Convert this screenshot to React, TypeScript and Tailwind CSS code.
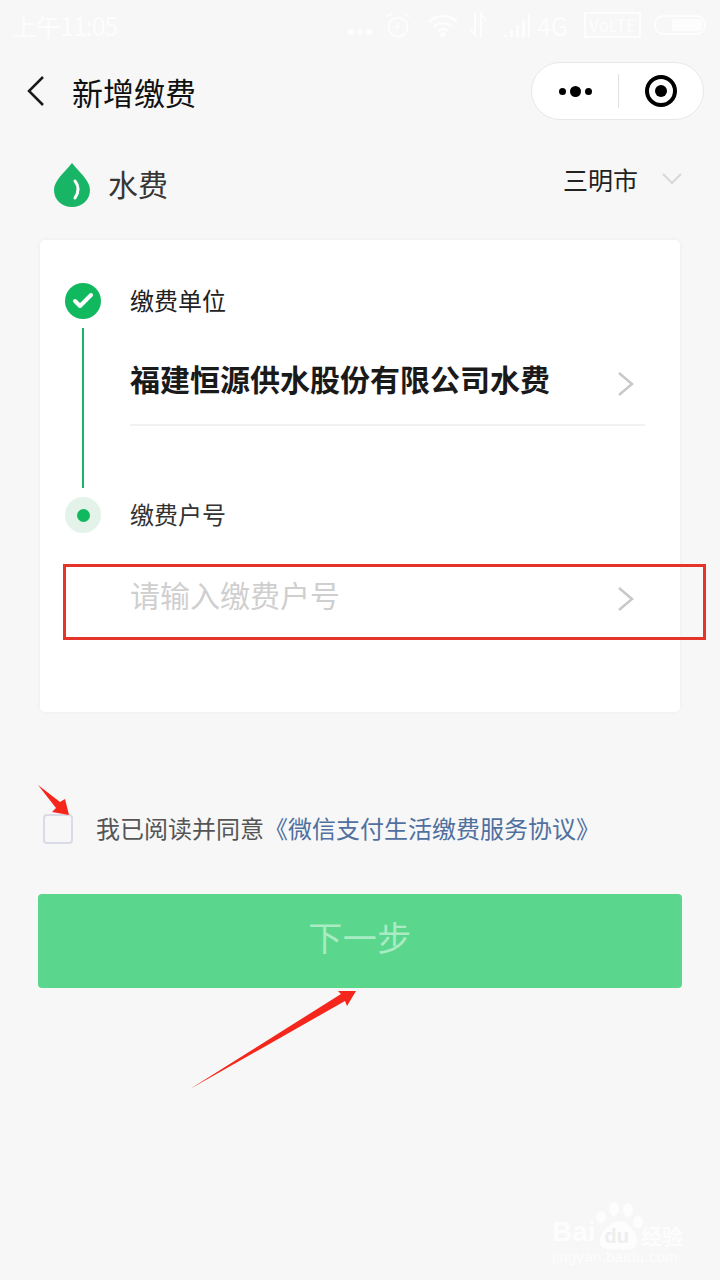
import { Check } from 'lucide-react'

const cjk = "font-['Noto_Sans_CJK_SC','Noto_Sans',sans-serif]"

function RowChevron({ className }: { className?: string }) {
  return (
    <svg className={className} width="18" height="26" viewBox="0 0 18 26" fill="none" stroke="#c8c8c8" strokeWidth="2.500">
      <path d="M2 2l13 11L2 24" />
    </svg>
  )
}

function StatusBar() {
  return (
    <div className="flex h-[50px] items-center justify-between pl-[12px] pr-[14px] text-white opacity-80">
      <span className="text-[25px] leading-none tracking-[-1px]">上午11:05</span>
      <div className="flex items-center">
        <div className="mt-[14px] flex gap-[3px]">
          <span className="h-[6px] w-[6px] rounded-full bg-white" />
          <span className="h-[6px] w-[6px] rounded-full bg-white" />
          <span className="h-[6px] w-[6px] rounded-full bg-white" />
        </div>
        {/* alarm */}
        <svg className="ml-[13px]" width="26" height="28" viewBox="0 0 26 28" fill="none" stroke="white" strokeWidth="2">
          <circle cx="13" cy="16" r="9.500" />
          <path d="M13 11v6l-3-2M2 6l5-4M24 6l-5-4" />
        </svg>
        {/* wifi */}
        <svg className="ml-[15px]" width="34" height="24" viewBox="0 0 32 24" fill="none" stroke="white" strokeWidth="2.500">
          <path d="M2 9c8-8 20-8 28 0M7 14c5-5 13-5 18 0M11 18c3-2.500 7-2.500 10 0" />
          <circle cx="16" cy="22" r="1.500" fill="white" />
        </svg>
        {/* data arrows */}
        <svg className="ml-[8px]" width="20" height="30" viewBox="0 0 20 30" fill="none" stroke="white" strokeWidth="2">
          <path d="M7 3v22L2 19M13 27V4l5 6" />
        </svg>
        {/* signal */}
        <svg className="ml-[14px]" width="30" height="26" viewBox="0 0 28 26" fill="white">
          <path d="M1 23h3v2H1zM7 18h3v7H7zM13 13h3v12h-3zM19 8h3v17h-3zM25 2h2v23h-2z" />
        </svg>
        <span className="ml-[5px] text-[25px] leading-none">4G</span>
        <span className="ml-[16px] border-2 border-white px-[3px] text-[17px] leading-[22px]">VoLTE</span>
        <div className="ml-[13px] flex h-[20px] w-[52px] items-center justify-end rounded-[9px] border-2 border-white pr-[2px]">
          <span className="h-[12px] w-[30px] rounded-[3px] bg-white" />
        </div>
      </div>
    </div>
  )
}

function Arrows() {
  return (
    <svg className="absolute left-0 top-0 pointer-events-none" width="720" height="1280" viewBox="0 0 720 1280" fill="#f5261b">
      <path d="M38 785L60 802L65 799L69 815L52 812L56 808Z" />
      <path d="M190 1089L341 994L338 991L356 991L347 1006L345 1001Z" />
    </svg>
  )
}

function Watermark() {
  return (
    <div className="absolute left-[552px] top-[1202px] w-[160px] text-white opacity-80">
      <svg className="absolute left-[38px] top-0" width="70" height="52" viewBox="0 0 70 52" fill="white">
        <ellipse cx="11" cy="15" rx="5" ry="6" />
        <ellipse cx="24" cy="7" rx="5" ry="7" />
        <ellipse cx="38" cy="8" rx="5" ry="7" />
        <ellipse cx="48" cy="20" rx="5" ry="6" />
        <path d="M29 19c8 0 18 11 18 20 0 9-9 10-18 8-9 2-19 1-19-8 0-9 11-20 19-20z" />
      </svg>
      <div className="relative flex h-[44px] items-end font-['Liberation_Sans',sans-serif] text-[28px] font-bold leading-none">
        <span>Bai</span>
        <span className="ml-[9px] text-[20px] text-[#ececec]">du</span>
        <span className={`ml-[12px] text-[21px] ${cjk}`}>经验</span>
      </div>
      <div className="relative mt-[1px] font-['Liberation_Sans',sans-serif] text-[15px] leading-[20px] tracking-[0.3px]">jingyan.baidu.com</div>
    </div>
  )
}

export default function App() {
  return (
    <div className={`relative h-[1280px] w-[720px] overflow-hidden bg-[#f7f7f7] ${cjk}`}>
      <StatusBar />

      {/* Nav */}
      <div className="mt-[12px] flex h-[58px] items-center justify-between pl-[26px] pr-[16px]">
        <div className="flex items-center">
          <svg width="19" height="32" viewBox="0 0 19 32" fill="none" stroke="#1a1a1a" strokeWidth="2.500">
            <path d="M17 2L3 16l14 14" />
          </svg>
          <span className="ml-[27px] text-[31px] leading-none text-[#111]">新增缴费</span>
        </div>
        <div className="flex h-[58px] w-[173px] items-center rounded-full border border-[#e8e8e8] bg-white">
          <div className="flex w-[86px] items-center justify-center gap-[4px]">
            <span className="h-[7px] w-[7px] rounded-full bg-black" />
            <span className="h-[11px] w-[11px] rounded-full bg-black" />
            <span className="h-[7px] w-[7px] rounded-full bg-black" />
          </div>
          <div className="h-[34px] w-px bg-[#e0e0e0]" />
          <div className="flex flex-1 items-center justify-center">
            <div className="flex h-[32px] w-[32px] items-center justify-center rounded-full border-[4px] border-black">
              <span className="h-[12px] w-[12px] rounded-full bg-black" />
            </div>
          </div>
        </div>
      </div>

      {/* Service row */}
      <div className="mt-[40px] flex h-[50px] items-center justify-between pl-[52px] pr-[38px]">
        <div className="flex items-center">
          <svg width="40" height="46" viewBox="0 0 40 46">
            <path d="M20 1C14 9 2 18 2 28c0 10 8 17 18 17s18-7 18-17C38 18 26 9 20 1z" fill="#18b566" />
            <path d="M23 19c4 5 4 11 0 17" fill="none" stroke="white" strokeWidth="3" strokeLinecap="round" />
          </svg>
          <span className="ml-[16px] -mt-[4px] text-[30px] leading-none text-[#353535]">水费</span>
        </div>
        <div className="-mt-[12px] flex items-center">
          <span className="text-[25px] leading-none text-[#222]">三明市</span>
          <svg className="ml-[24px]" width="20" height="12" viewBox="0 0 20 12" fill="none" stroke="#d8d8d8" strokeWidth="2">
            <path d="M1 1l9 9 9-9" />
          </svg>
        </div>
      </div>

      {/* Card */}
      <div className="mx-[40px] mt-[30px] h-[472px] rounded-[5px] bg-white pl-[25px] pr-[35px] pt-[43px] shadow-[0_0_4px_rgba(0,0,0,0.05)]">
        <div className="flex items-center">
          <div className="flex h-[36px] w-[36px] items-center justify-center rounded-full bg-[#10b95e]">
            <Check className="h-[24px] w-[24px] text-white" strokeWidth={4} />
          </div>
          <span className="ml-[29px] -mt-[2px] text-[24px] leading-none text-[#222]">缴费单位</span>
        </div>

        <div className="flex h-[178px]">
          <div className="flex w-[36px] justify-center pt-[9px]">
            <div className="h-[160px] w-[2px] bg-[#18b566]" />
          </div>
          <div className="ml-[29px] flex-1">
            <div className="flex h-[107px] items-center justify-between border-b-2 border-[#f1f1f1]">
              <span className="mt-[12px] text-[30px] font-bold leading-none text-[#1a1a1a]">福建恒源供水股份有限公司水费</span>
              <RowChevron className="mr-[10px] mt-[24px]" />
            </div>
          </div>
        </div>

        <div className="flex items-center">
          <div className="flex h-[36px] w-[36px] items-center justify-center rounded-full bg-[#e3f3e9]">
            <span className="h-[13px] w-[13px] rounded-full bg-[#10b95e]" />
          </div>
          <span className="ml-[29px] -mt-[2px] text-[24px] leading-none text-[#333]">缴费户号</span>
        </div>

        <div className="ml-[65px] mt-[45px] flex h-[36px] items-center justify-between">
          <span className="-mt-[4px] text-[30px] leading-[36px] text-[#cfcfcf]">请输入缴费户号</span>
          <RowChevron className="mr-[10px] mt-[6px]" />
        </div>
      </div>

      {/* Agreement */}
      <div className="mt-[102px] flex items-center pl-[43px]">
        <div className="h-[30px] w-[30px] rounded-[4px] border-2 border-[#d9dbe6] bg-[#f7f7f7]" />
        <span className="ml-[23px] -mt-[2px] text-[24px] leading-[30px] text-[#555]">我已阅读并同意</span>
        <span className="-mt-[2px] text-[24px] leading-[30px] text-[#50709f]">《微信支付生活缴费服务协议》</span>
      </div>

      {/* Next button */}
      <div className="mx-[38px] mt-[50px] flex h-[94px] items-center justify-center rounded-[4px] bg-[#5ad78c]">
        <span className="-mt-[8px] text-[34px] leading-none tracking-[0.5px] text-[#a9ebc3]">下一步</span>
      </div>

      {/* Annotations */}
      <div className="absolute left-[63px] top-[564px] h-[76px] w-[643px] border-[3px] border-[#e5352b]" />
      <Arrows />
      <Watermark />
    </div>
  )
}
